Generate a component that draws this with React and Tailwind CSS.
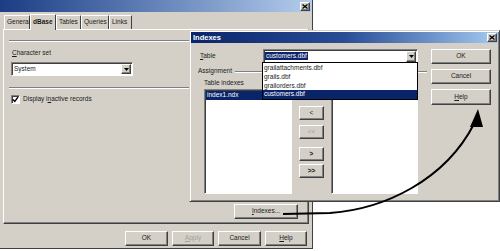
import React from "react";

const raised =
  "bg-[#d4d0c8] border border-t-white border-l-white border-r-[#404040] border-b-[#404040] shadow-[inset_-1px_-1px_0_#808080]";
const sunken =
  "border border-t-[#808080] border-l-[#808080] border-r-white border-b-white shadow-[inset_1px_1px_0_#404040]";
const txt = "text-[6.5px] leading-none text-[#1a1a1a]";

function CloseBtn() {
  return (
    <div className={`${raised} w-[10px] h-[9px] flex items-center justify-center`}>
      <svg width="6" height="5" viewBox="0 0 6 5">
        <path d="M0.5 0.5 L5.5 4.5 M5.5 0.5 L0.5 4.5" stroke="#000" strokeWidth="1.3" />
      </svg>
    </div>
  );
}

function DownArrow() {
  return (
    <svg width="5" height="3" viewBox="0 0 5 3">
      <path d="M0 0 H5 L2.5 3 Z" fill="#000" />
    </svg>
  );
}

function Btn({ children, w, h = "h-[15px]", dim }) {
  return (
    <div className={`${raised} ${w} ${h} flex items-center justify-center ${txt} ${dim ? "text-[#a0a0a0]" : ""}`}>
      {children}
    </div>
  );
}

function Sep() {
  return <div className="border-t border-t-[#808080] border-b border-b-white" />;
}

function Tab({ w, children, sel }) {
  return (
    <div
      className={`${w} ${sel ? "h-[16px] font-bold relative z-10 -mb-px" : "h-[14px]"} bg-[#d4d0c8] border-t border-l border-r border-t-white border-l-white border-r-[#404040] rounded-t-[1px] flex items-center pl-[2px] ${txt}`}
    >
      {children}
    </div>
  );
}

export default function App() {
  return (
    <div className="relative w-[500px] h-[251px] bg-white overflow-hidden font-['Liberation_Sans',Arial,sans-serif]">
      {/* Background dialog */}
      <div className="absolute left-0 top-0 w-[313px] h-[249px] bg-[#d4d0c8] border-r border-b border-r-[#404040] border-b-[#404040] flex flex-col">
        <div className="h-[12px] bg-gradient-to-r from-[#1c3c84] to-[#b4cdec] flex items-center justify-end pr-[2px]">
          <CloseBtn />
        </div>
        <div className="h-[17px] flex items-end pl-[4px]">
          <Tab w="w-[26px]">General</Tab>
          <Tab w="w-[26px]" sel>dBase</Tab>
          <Tab w="w-[25px]">Tables</Tab>
          <Tab w="w-[28px]">Queries</Tab>
          <Tab w="w-[23px]">Links</Tab>
        </div>
        <div className="mx-[3px] h-[195px] border border-t-white border-l-white border-r-[#404040] border-b-[#404040] shadow-[inset_-1px_-1px_0_#808080] flex flex-col px-[5px]">
          <div className="mt-[10px]">
            <Sep />
          </div>
          <div className={`mt-[8px] ml-[3px] h-[8px] ${txt}`}>
            <span className="underline">C</span>haracter set
          </div>
          <div className={`mt-[4px] ml-[2px] w-[122px] h-[14px] bg-white ${sunken} flex items-center justify-between pl-[2px] pr-[1px]`}>
            <span className={txt}>System</span>
            <div className={`${raised} w-[10px] h-[10px] flex items-center justify-center`}>
              <DownArrow />
            </div>
          </div>
          <div className="mt-[11px]">
            <Sep />
          </div>
          <div className="mt-[6px] ml-[2px] flex items-center gap-[3px]">
            <div className={`w-[9px] h-[9px] bg-white ${sunken} flex items-center justify-center`}>
              <svg width="7" height="7" viewBox="0 0 7 7">
                <path d="M1 3.5 L2.8 5.5 L6 1.2" stroke="#000" strokeWidth="1.4" fill="none" />
              </svg>
            </div>
            <span className={txt}>
              Display i<span className="underline">n</span>active records
            </span>
          </div>
          <div className="mt-auto mb-[4px] self-end mr-[5px]">
            <Btn w="w-[64px]">
              <span>
                <span className="underline">I</span>ndexes...
              </span>
            </Btn>
          </div>
        </div>
        <div className="mt-[7px] flex justify-end gap-[4px] pr-[5px]">
          <Btn w="w-[43px]">OK</Btn>
          <Btn w="w-[42px]" dim>
            <span>
              <span className="underline">A</span>pply
            </span>
          </Btn>
          <Btn w="w-[43px]">Cancel</Btn>
          <Btn w="w-[42px]">
            <span>
              <span className="underline">H</span>elp
            </span>
          </Btn>
        </div>
      </div>

      {/* Indexes dialog */}
      <div className="absolute left-[189px] top-[30px] w-[311px] h-[172px] bg-[#d4d0c8] border border-t-[#d4d0c8] border-l-[#d4d0c8] border-r-[#404040] border-b-[#404040] shadow-[inset_1px_1px_0_white,inset_-1px_-1px_0_#808080] p-px flex flex-col">
        <div className="h-[11px] bg-gradient-to-r from-[#0a246a] via-[#2a4d96] to-[#a6caf0] flex items-center justify-between pl-[2px] pr-[1px]">
          <span className="text-[7.5px] leading-none font-bold text-white">Indexes</span>
          <CloseBtn />
        </div>
        <div className="relative flex-1 flex">
          <div className="w-[239px] flex flex-col">
            <div className="mt-[6px] flex items-center">
              <span className={`ml-[9px] w-[63px] ${txt}`}>
                <span className="underline">T</span>able
              </span>
              <div className={`w-[155px] h-[14px] bg-white ${sunken} flex items-center justify-between pl-px pr-[1px]`}>
                <span className={`${txt} bg-[#0a246a] text-white px-px py-[1px]`}>customers.dbf</span>
                <div className={`${raised} w-[10px] h-[11px] flex items-center justify-center`}>
                  <DownArrow />
                </div>
              </div>
            </div>
            <div className="mt-[4px] flex items-center h-[9px]">
              <span className={`ml-[7px] ${txt}`}>Assignment</span>
              <div className="ml-[3px] flex-1 mr-[3px]">
                <Sep />
              </div>
            </div>
            <div className={`mt-[4px] ml-[13px] h-[8px] ${txt}`}>Table indexes</div>
            <div className="mt-[1px] ml-[13px] flex">
              <div className={`w-[88px] h-[105px] bg-white ${sunken} p-px`}>
                <div className={`h-[9px] bg-[#0a246a] text-white flex items-center pl-[1px] ${txt} text-white`}>
                  index1.ndx
                </div>
              </div>
              <div className="ml-[7px] w-[25px] flex flex-col">
                <div className="mt-[17px]">
                  <Btn w="w-[25px]" h="h-[14px]">&lt;</Btn>
                </div>
                <div className="mt-[5px]">
                  <Btn w="w-[25px]" h="h-[14px]">
                    <span className="text-[#9a9a9a]">&lt;&lt;</span>
                  </Btn>
                </div>
                <div className="mt-[8px]">
                  <Btn w="w-[25px]" h="h-[14px]">
                    <span className="font-bold">&gt;</span>
                  </Btn>
                </div>
                <div className="mt-[3px]">
                  <Btn w="w-[25px]" h="h-[14px]">
                    <span className="font-bold">&gt;&gt;</span>
                  </Btn>
                </div>
              </div>
              <div className={`ml-[7px] w-[87px] h-[105px] bg-white ${sunken}`} />
            </div>
          </div>
          <div className="ml-[1px] pt-[6px] flex flex-col gap-[5px]">
            <Btn w="w-[60px]">OK</Btn>
            <Btn w="w-[60px]">Cancel</Btn>
            <Btn w="w-[60px]" h="h-[16px]">
              <span>
                <span className="underline">H</span>elp
              </span>
            </Btn>
          </div>

          {/* dropdown list */}
          <div className="absolute left-[71px] top-[19px] w-[156px] h-[38px] bg-white border border-black flex flex-col pt-[1px]">
            <div className={`h-[9px] flex items-center pl-px ${txt}`}>grailattachments.dbf</div>
            <div className={`h-[9px] flex items-center pl-px ${txt}`}>grails.dbf</div>
            <div className={`h-[9px] flex items-center pl-px ${txt}`}>grailorders.dbf</div>
            <div className={`h-[9px] flex items-center pl-px bg-[#0a246a] ${txt} text-white`}>customers.dbf</div>
          </div>
        </div>
      </div>

      {/* Arrow */}
      <svg className="absolute left-0 top-0 pointer-events-none" width="500" height="251" viewBox="0 0 500 251">
        <path d="M283 214 L330 213 C385 209 445 180 474 124" stroke="#000" strokeWidth="2" fill="none" />
        <path d="M478 109 L470 127 L483 127 Z" fill="#000" />
      </svg>
    </div>
  );
}
